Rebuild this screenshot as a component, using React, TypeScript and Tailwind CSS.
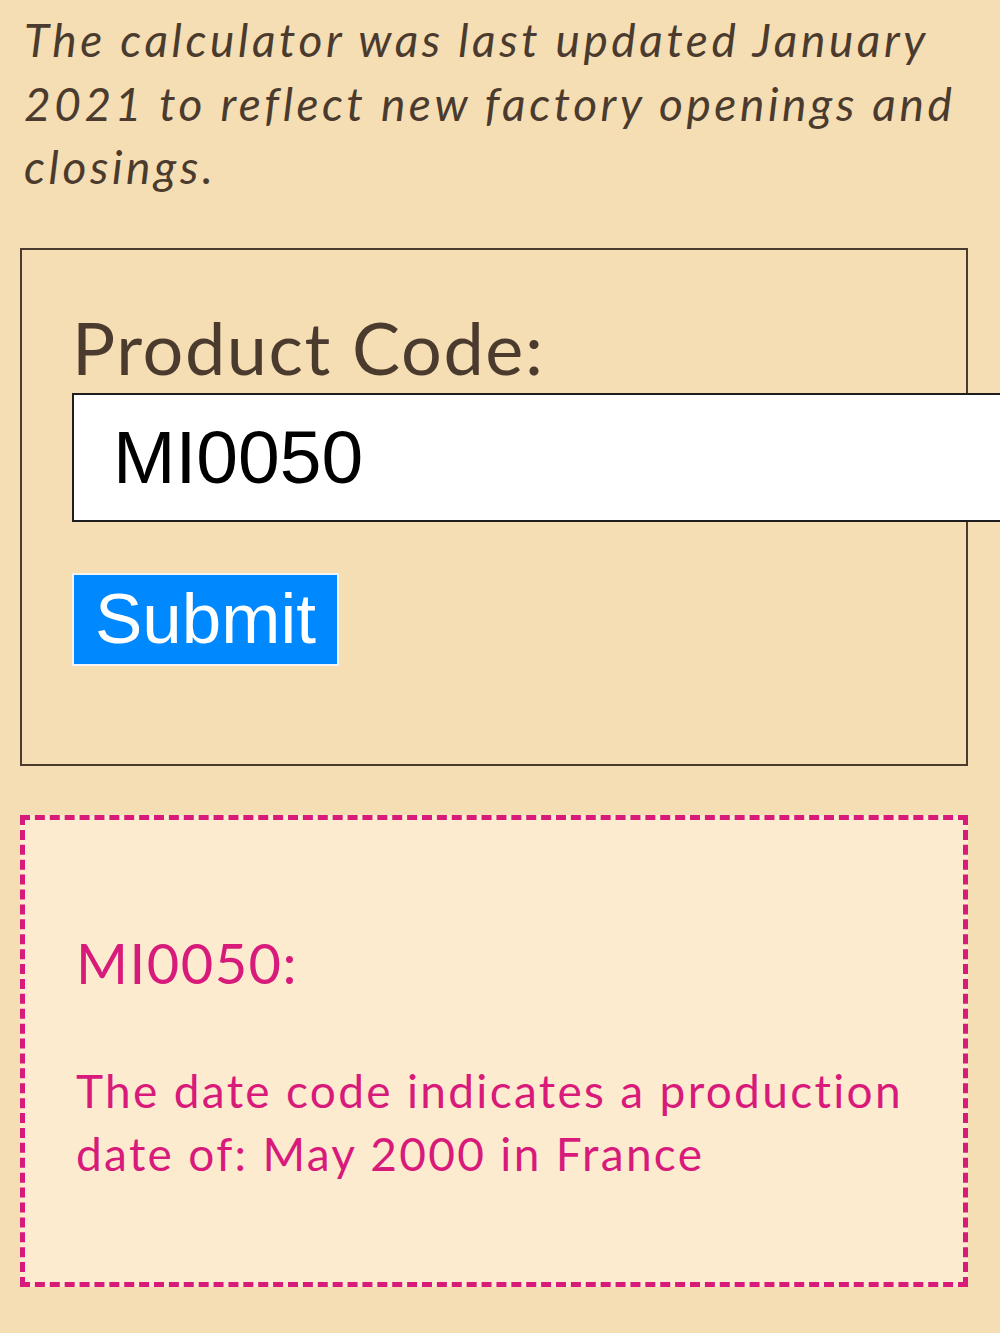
export default function App() {
  return (
    <div className="min-h-[1333px] w-[1000px] overflow-hidden bg-[#f5deb3] pl-[20px] text-[#4a3b2e] font-['Lato',sans-serif]">
      <p className="w-[980px] pl-[4px] pt-[8px] text-[46px] italic leading-[63.5px] tracking-[3.6px]">
        The calculator was last updated January
        <br />
        2021 to reflect new factory openings and
        <br />
        closings.
      </p>

      <div className="mt-[49px] h-[518px] w-[948px] border-2 border-[#4a3b2e] pl-[50px] pt-[55px]">
        <label className="block text-[72px] leading-[84px] tracking-[1.6px]">Product Code:</label>
        <input
          className="mt-[4px] block h-[129px] w-[960px] border-2 border-[#1e1e1e] bg-white pl-[39px] font-['Liberation_Sans',Arial,sans-serif] text-[75px] text-black outline-none"
          defaultValue="MI0050"
          readOnly
        />
        <button className="mt-[51px] block h-[93px] border-2 border-[#f4f4f4] bg-[#0088ff] px-[21px] font-['Liberation_Sans',Arial,sans-serif] text-[71px] leading-[80px] text-white">
          Submit
        </button>
      </div>

      <div className="mt-[49px] h-[472px] w-[948px] border-[5px] border-dashed border-[#d81b7b] bg-[#fdebd0] pl-[51px] pt-[110px] text-[#d81b7b]">
        <h2 className="text-[56px] leading-[66px] tracking-[1.5px]">MI0050:</h2>
        <p className="mt-[63px] text-[46px] leading-[63px] tracking-[2.3px]">
          The date code indicates a production
          <br />
          date of: May 2000 in France
        </p>
      </div>
    </div>
  );
}
